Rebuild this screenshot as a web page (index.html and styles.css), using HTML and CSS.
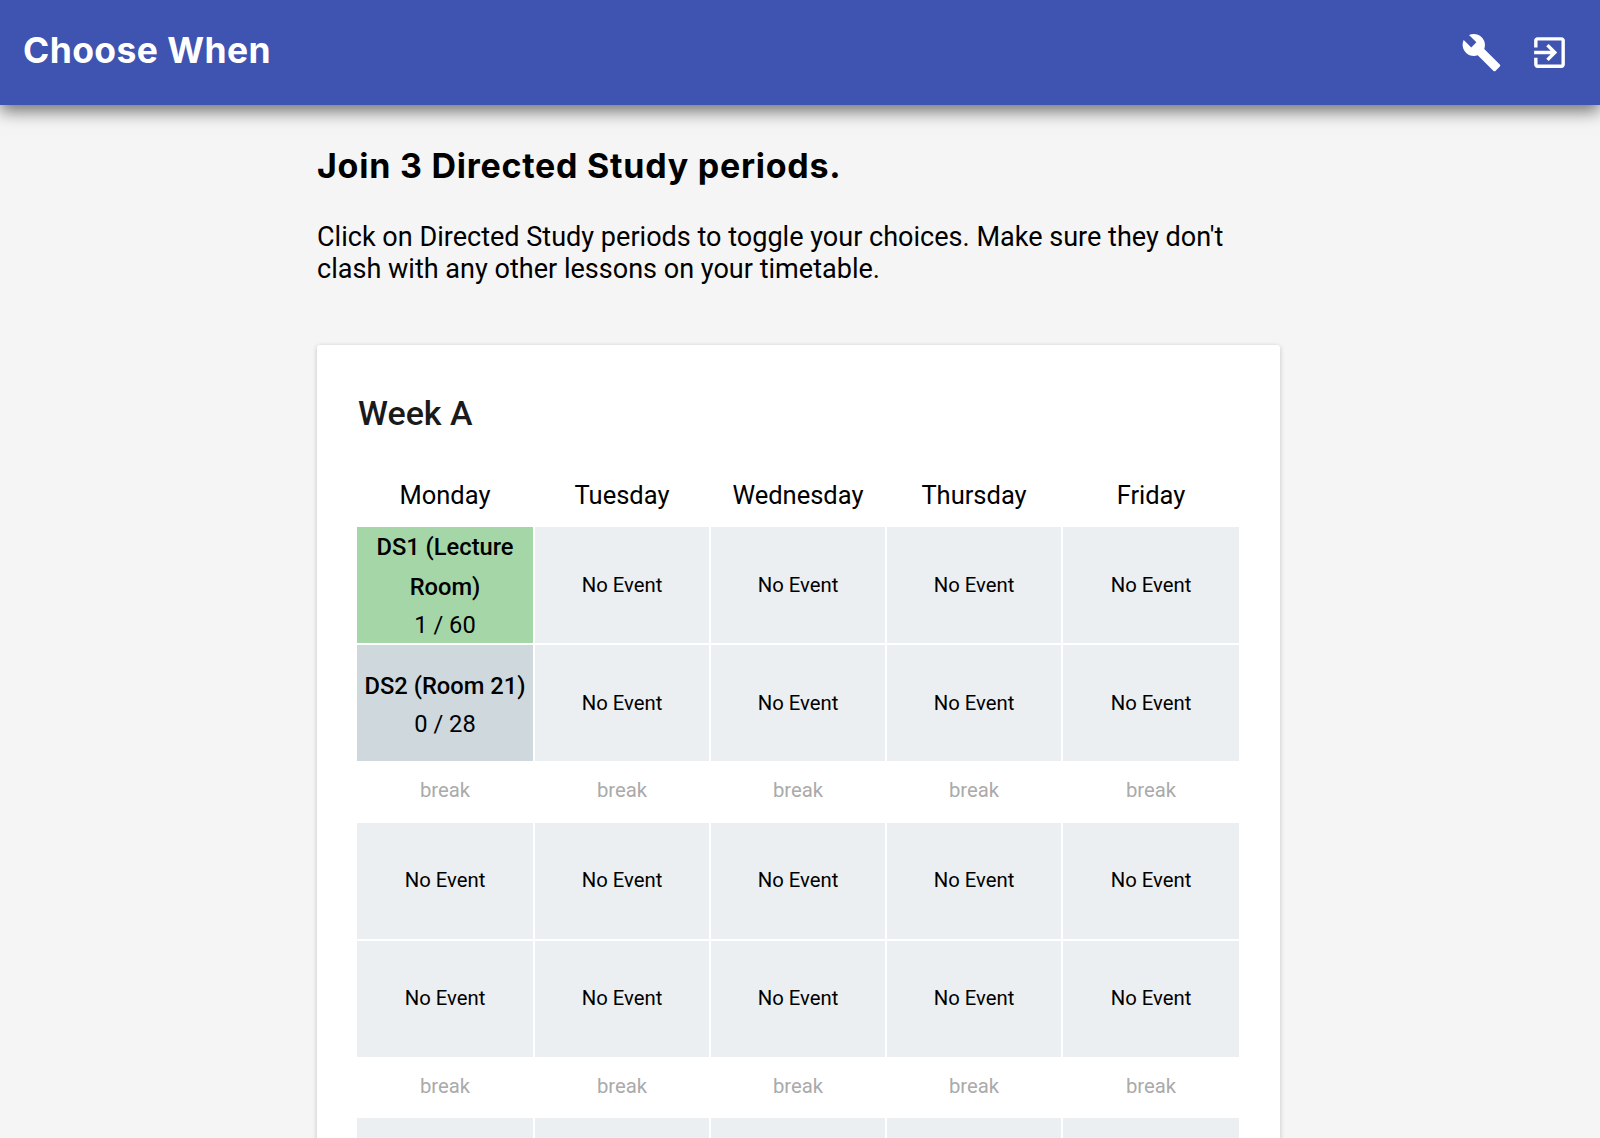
FILE: index.html
```html
<!DOCTYPE html>
<html lang="en">
<head>
<meta charset="utf-8">
<title>Choose When</title>
<link rel="stylesheet" href="styles.css">
</head>
<body>
<header class="bar">
  <div class="brand">Choose When</div>
  <nav class="actions">
    <svg class="icon" viewBox="0 0 24 24"><path d="M22.7 19l-9.1-9.1c.9-2.3.4-5-1.5-6.9-2-2-5-2.4-7.4-1.3L9 6 6 9 1.6 4.7C.4 7.1.9 10.1 2.9 12.1c1.9 1.9 4.6 2.4 6.9 1.5l9.1 9.1c.4.4 1 .4 1.4 0l2.3-2.3c.5-.4.5-1.1.1-1.4z"/></svg>
    <svg class="icon" viewBox="0 0 24 24"><path d="M10.09 15.59L11.5 17l5-5-5-5-1.41 1.41L12.67 11H3v2h9.67l-2.58 2.59zM19 3H5c-1.11 0-2 .9-2 2v4h2V5h14v14H5v-4H3v4c0 1.1.89 2 2 2h14c1.1 0 2-.9 2-2V5c0-1.1-.9-2-2-2z"/></svg>
  </nav>
</header>
<main class="page">
  <h1 class="title">Join 3 Directed Study periods.</h1>
  <p class="intro">Click on Directed Study periods to toggle your choices. Make sure they don't clash with any other lessons on your timetable.</p>
  <section class="card">
    <h2 class="week">Week A</h2>
    <div class="grid">
      <div class="day">Monday</div><div class="day">Tuesday</div><div class="day">Wednesday</div><div class="day">Thursday</div><div class="day">Friday</div>

      <div class="cell joined"><strong>DS1 (Lecture Room)</strong><span class="count">1 / 60</span></div>
      <div class="cell">No Event</div><div class="cell">No Event</div><div class="cell">No Event</div><div class="cell">No Event</div>

      <div class="cell open"><strong>DS2 (Room 21)</strong><span class="count">0 / 28</span></div>
      <div class="cell">No Event</div><div class="cell">No Event</div><div class="cell">No Event</div><div class="cell">No Event</div>

      <div class="brk">break</div><div class="brk">break</div><div class="brk">break</div><div class="brk">break</div><div class="brk">break</div>

      <div class="cell">No Event</div><div class="cell">No Event</div><div class="cell">No Event</div><div class="cell">No Event</div><div class="cell">No Event</div>
      <div class="cell">No Event</div><div class="cell">No Event</div><div class="cell">No Event</div><div class="cell">No Event</div><div class="cell">No Event</div>

      <div class="brk">break</div><div class="brk">break</div><div class="brk">break</div><div class="brk">break</div><div class="brk">break</div>

      <div class="cell"></div><div class="cell"></div><div class="cell"></div><div class="cell"></div><div class="cell"></div>
    </div>
  </section>
</main>
</body>
</html>
```
FILE: styles.css
```css
* { box-sizing: border-box; }
html, body { margin: 0; height: 100%; overflow: hidden; }
body { background: #f5f5f5; color: #000; font-family: Roboto, "Liberation Sans", sans-serif; }

.bar {
  height: 105px;
  background: #3f53b1;
  color: #fff;
  display: flex;
  align-items: center;
  justify-content: space-between;
  padding: 0 30px 0 23px;
  box-shadow: 0 6px 16px rgba(0, 0, 0, 0.55);
  position: relative;
}
.brand { font-family: Inter, sans-serif; font-weight: 700; font-size: 35.5px; letter-spacing: 0.4px; line-height: 1; padding-bottom: 4px; }
.actions { display: flex; gap: 27px; align-items: center; }
.icon { width: 41px; height: 41px; fill: #fff; display: block; }

.page { width: 966px; margin: 0 auto; }
.title { margin: 0; padding-top: 38px; font-family: Inter, sans-serif; font-weight: 700; font-size: 34px; letter-spacing: 0.75px; line-height: 46px; }
.intro { margin: 0; padding-top: 32px; font-size: 27.05px; line-height: 32px; width: 930px; }

.card {
  margin-top: 60px;
  background: #fff;
  border-radius: 3px;
  box-shadow: 0 1px 5px rgba(0, 0, 0, 0.2);
  width: 963px;
  padding: 42px 40px 40px;
}
.week { margin: 0; padding-left: 1px; font-size: 34px; font-weight: 500; line-height: 52px; color: #1a1a1a; }

.grid { display: grid; grid-template-columns: 176px 176px 176px 176px 178px; margin-top: 25px; text-align: center; }
.grid > * { border-left: 2px solid transparent; }
.grid > :nth-child(5n+1) { border-left: 0; }
.day { height: 61px; font-size: 25.5px; line-height: 62px; }
.cell {
  height: 118px;
  background: #eceff1;
  background-clip: padding-box;
  border-top: 2px solid #fff;
  padding-bottom: 1px;
  font-size: 20.3px;
  display: flex;
  flex-direction: column;
  justify-content: center;
  align-items: center;
}
.joined { background: #a5d6a7; background-clip: padding-box; font-size: 23.7px; justify-content: flex-start; }
.open { background: #cfd8dc; background-clip: padding-box; font-size: 23.7px; padding: 2px 0 0; }
.joined strong, .open strong { font-weight: 500; line-height: 40px; }
.count { line-height: 36px; }
.brk { height: 59.5px; font-size: 20.3px; line-height: 59.5px; color: #aaa; }
```
